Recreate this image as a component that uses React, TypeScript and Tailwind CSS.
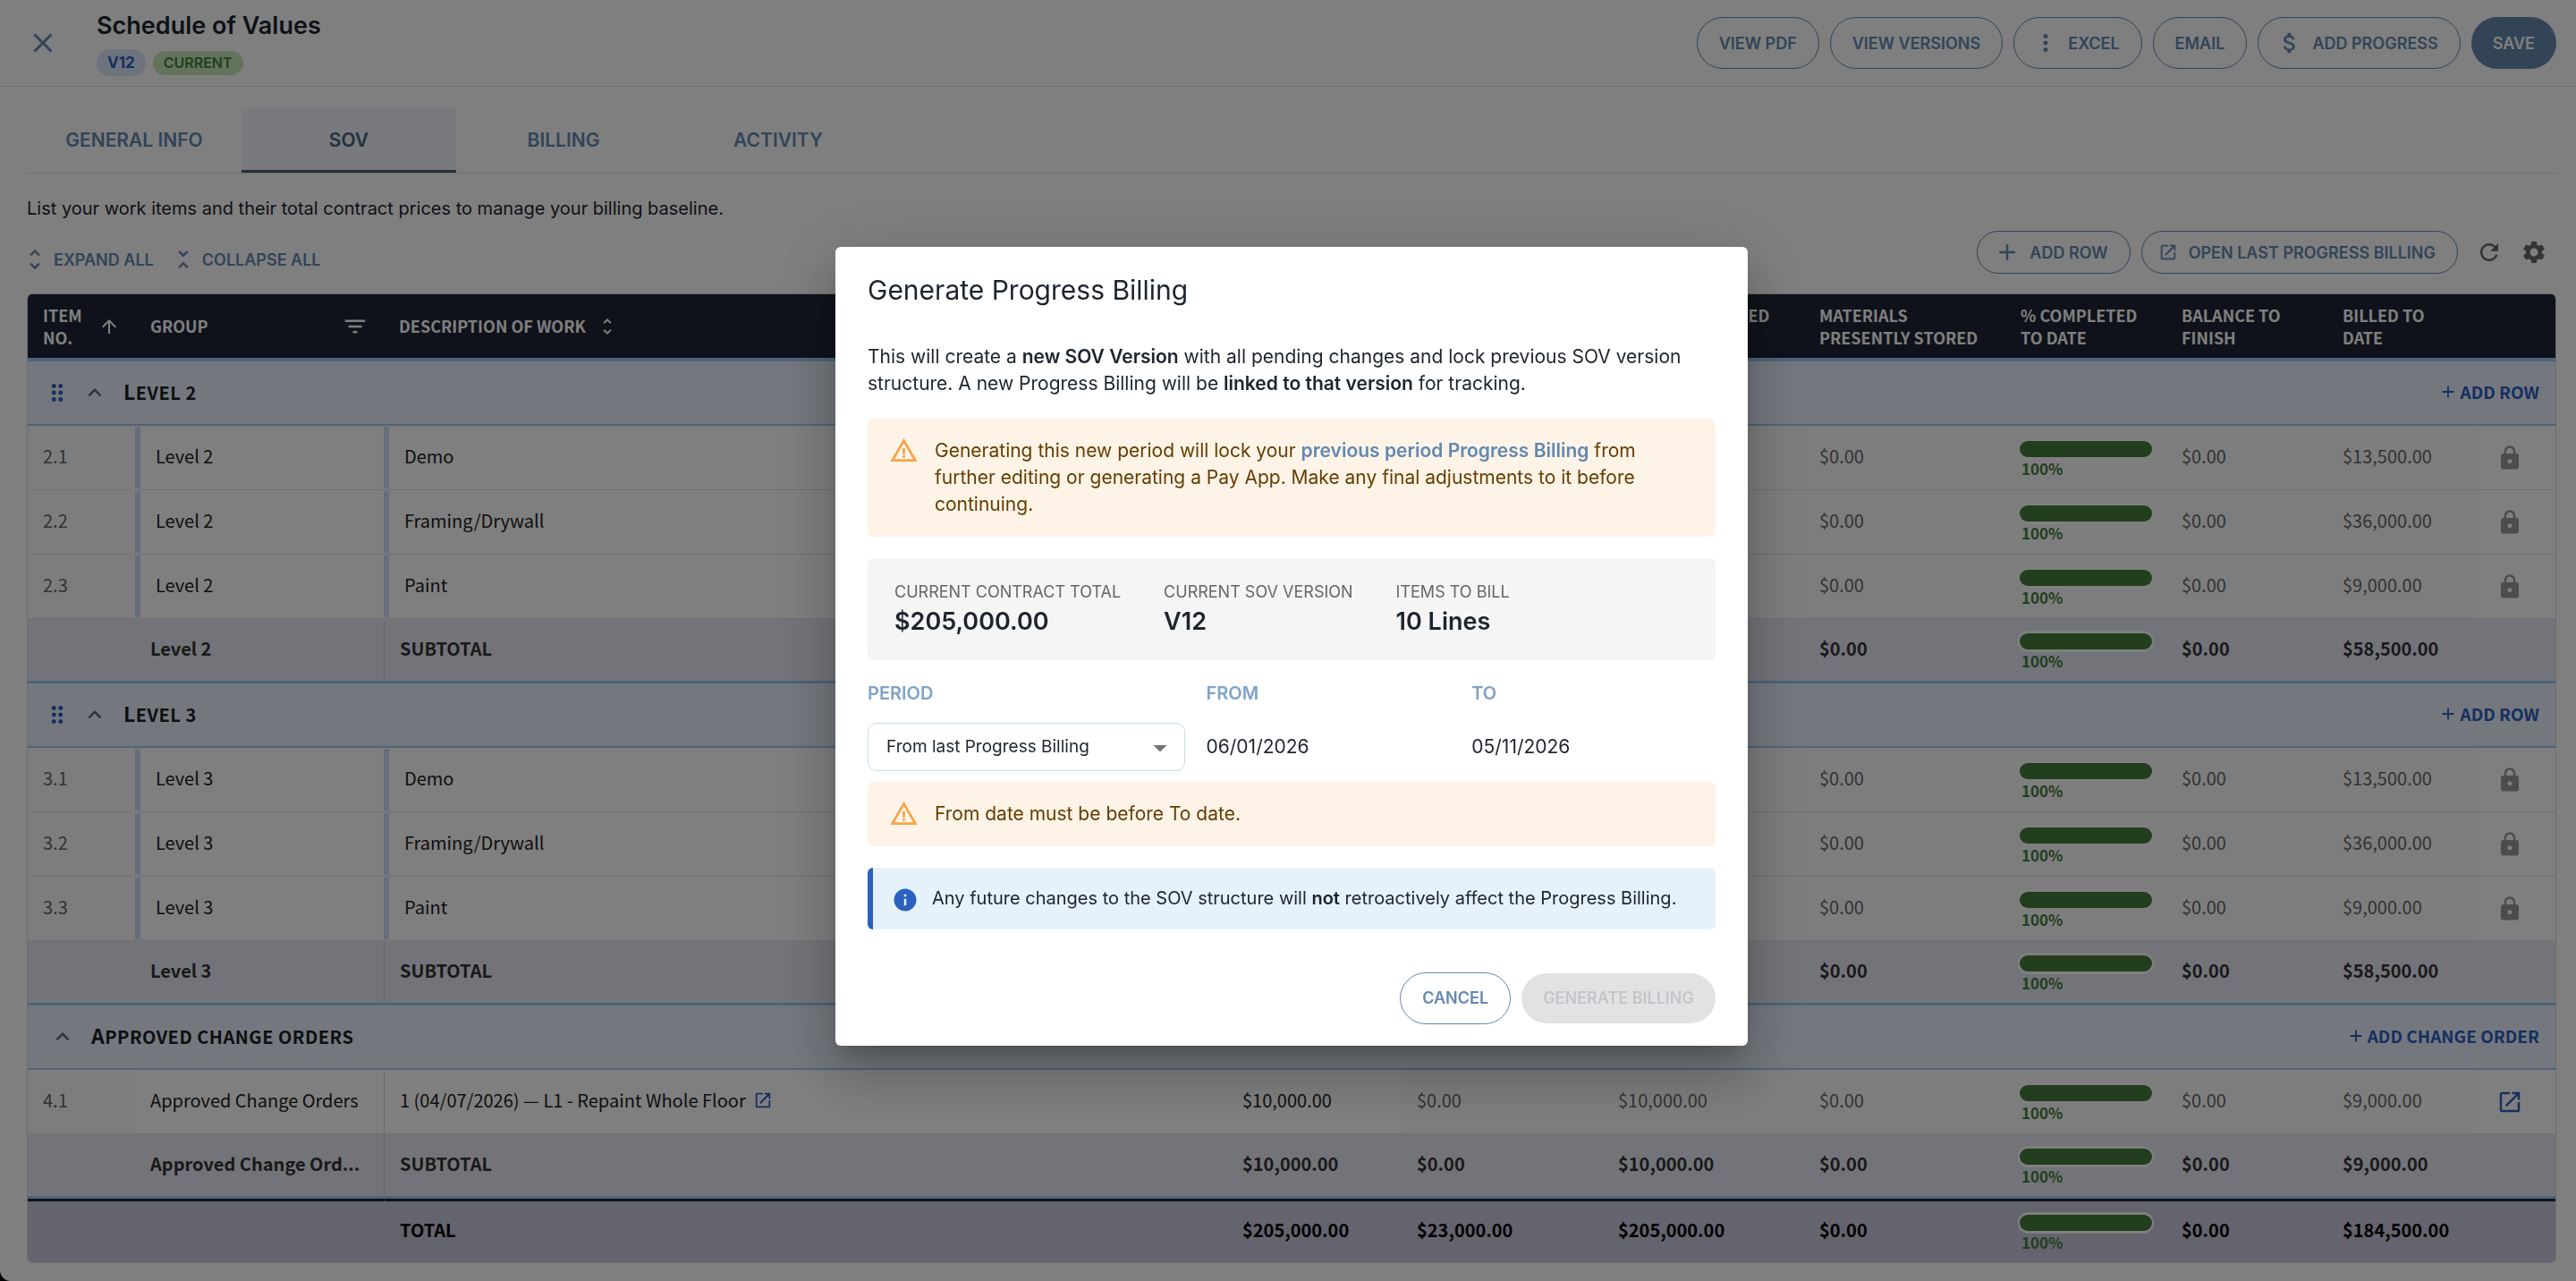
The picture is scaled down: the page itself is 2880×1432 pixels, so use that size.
import React from 'react';
import {
  MdAdd,
  MdArrowDropDown,
  MdArrowUpward,
  MdAttachMoney,
  MdClose,
  MdDragIndicator,
  MdFilterList,
  MdInfo,
  MdKeyboardArrowUp,
  MdLock,
  MdMoreVert,
  MdOpenInNew,
  MdRefresh,
  MdSettings,
  MdUnfoldLess,
  MdUnfoldMore,
  MdWarningAmber,
} from 'react-icons/md';

interface Item {
  no: string;
  group: string;
  description: string;
  value: string;
  previous: string;
  completed: string;
  billed: string;
  changeOrder?: boolean;
}

interface Section {
  title: string;
  action: string;
  draggable: boolean;
  items: Item[];
  subtotal: Item;
}

const levelItems = (level: number): Item[] => [
  { no: `${level}.1`, group: `Level ${level}`, description: 'Demo', value: '$15,000.00', previous: '$1,500.00', completed: '$15,000.00', billed: '$13,500.00' },
  { no: `${level}.2`, group: `Level ${level}`, description: 'Framing/Drywall', value: '$40,000.00', previous: '$4,000.00', completed: '$40,000.00', billed: '$36,000.00' },
  { no: `${level}.3`, group: `Level ${level}`, description: 'Paint', value: '$10,000.00', previous: '$1,000.00', completed: '$10,000.00', billed: '$9,000.00' },
];

const levelSection = (level: number): Section => ({
  title: `Level ${level}`,
  action: 'ADD ROW',
  draggable: true,
  items: levelItems(level),
  subtotal: { no: '', group: `Level ${level}`, description: 'SUBTOTAL', value: '$65,000.00', previous: '$6,500.00', completed: '$65,000.00', billed: '$58,500.00' },
});

const sections: Section[] = [
  levelSection(2),
  levelSection(3),
  {
    title: 'Approved change orders',
    action: 'ADD CHANGE ORDER',
    draggable: false,
    items: [
      { no: '4.1', group: 'Approved Change Orders', description: '1 (04/07/2026) — L1 - Repaint Whole Floor', value: '$10,000.00', previous: '$0.00', completed: '$10,000.00', billed: '$9,000.00', changeOrder: true },
    ],
    subtotal: { no: '', group: 'Approved Change Ord...', description: 'SUBTOTAL', value: '$10,000.00', previous: '$0.00', completed: '$10,000.00', billed: '$9,000.00' },
  },
];

const outlineButton =
  'flex items-center rounded-full border border-[#6488b0] px-6 text-[18px] font-semibold text-[#6488b0]';

const Header: React.FC = () => (
  <header className="flex h-[97px] items-center border-b border-[#dcdcdc] pl-[30px] pr-[22px]">
    <button aria-label="Close" className="mr-[42px] text-[#6488b0]">
      <MdClose className="size-9" />
    </button>
    <div>
      <h1 className="text-[27px] leading-9 font-semibold text-[#1d242e]">Schedule of Values</h1>
      <div className="mt-2 flex items-center gap-2">
        <span className="rounded-full bg-[#dbe7fb] px-3 text-[17px] leading-[30px] font-bold text-[#2a5fc0]">V12</span>
        <span className="rounded-full bg-[#c8e6b9] px-3 text-[16px] leading-[27px] font-semibold text-[#3f8032]">CURRENT</span>
      </div>
    </div>
    <div className="ml-auto flex gap-3">
      <button className={`${outlineButton} h-[58px]`}>VIEW PDF</button>
      <button className={`${outlineButton} h-[58px]`}>VIEW VERSIONS</button>
      <button className={`${outlineButton} h-[58px]`}>
        <MdMoreVert className="-ml-1 mr-2.5 size-[30px]" />
        EXCEL
      </button>
      <button className={`${outlineButton} h-[58px]`}>EMAIL</button>
      <button className={`${outlineButton} h-[58px]`}>
        <MdAttachMoney className="-ml-1 mr-2.5 size-[30px]" />
        ADD PROGRESS
      </button>
      <button className="h-[58px] rounded-full bg-[#6488ad] px-6 text-[18px] font-semibold text-white">SAVE</button>
    </div>
  </header>
);

const Tabs: React.FC = () => (
  <nav className="flex border-b border-[#dcdcdc] text-[21px] font-semibold text-[#6488b0]">
    <button className="h-[72px] w-60">GENERAL INFO</button>
    <button className="h-[72px] w-60 border-b-[3px] border-[#48637d] bg-[#f0f4fa] pt-[3px] text-[#48637d]">SOV</button>
    <button className="h-[72px] w-60">BILLING</button>
    <button className="h-[72px] w-60">ACTIVITY</button>
  </nav>
);

const Toolbar: React.FC = () => (
  <div className="mt-[10px] mb-[22px] flex items-end justify-between">
    <div className="flex gap-6 text-[18px] font-semibold text-[#6488b0]">
      <button className="flex h-8 items-center gap-1.5">
        <MdUnfoldMore className="-ml-1.5 size-[30px]" />
        EXPAND ALL
      </button>
      <button className="flex h-8 items-center gap-1.5">
        <MdUnfoldLess className="-ml-1.5 size-[30px]" />
        COLLAPSE ALL
      </button>
    </div>
    <div className="flex items-center gap-3">
      <button className={`${outlineButton} h-12`}>
        <MdAdd className="-ml-1.5 mr-2.5 size-[30px]" />
        ADD ROW
      </button>
      <button className={`${outlineButton} h-12`}>
        <MdOpenInNew className="-ml-1.5 mr-3 size-[22px]" />
        OPEN LAST PROGRESS BILLING
      </button>
      <div className="ml-2 flex items-center gap-5 pr-2.5 text-[#666]">
        <button aria-label="Refresh"><MdRefresh className="size-[30px]" /></button>
        <button aria-label="Settings"><MdSettings className="size-[30px]" /></button>
      </div>
    </div>
  </div>
);

const Progress: React.FC = () => (
  <div className="pl-[14px]">
    <div className="w-[152px] rounded-full bg-white px-[2px] py-[3px]">
      <div className="h-[18px] rounded-full bg-[#467d3c]" />
    </div>
    <div className="pl-1 text-[17px] leading-5 font-bold text-[#467d3c]">100%</div>
  </div>
);

const ItemRow: React.FC<{ item: Item }> = ({ item }) => {
  const cell = 'h-[72px] border-b border-[#e0e0e0]';
  const locked = `${cell} bg-[#fafafa] px-[17px] pb-1 text-[#666]`;
  const bar = item.changeOrder
    ? 'flex h-[71px] items-center px-[17px] pb-1'
    : 'my-px flex h-[69px] items-center border-l-[6px] border-[#ccdcf2] px-[17px] pb-1';
  return (
    <tr>
      <td className={locked}>{item.no}</td>
      <td className={cell}><div className={bar}>{item.group}</div></td>
      <td className={item.changeOrder ? `${cell} border-l border-l-[#d4d4d8]` : cell}>
        <div className={bar}>
          {item.description}
          {item.changeOrder && (
            <a href="#change-order" aria-label="Open change order" className="ml-2 text-[#2a5fc0]">
              <MdOpenInNew className="size-[22px]" />
            </a>
          )}
        </div>
      </td>
      <td className={`${cell} px-[17px] pb-1`}>{item.value}</td>
      <td className={locked}>{item.previous}</td>
      <td className={locked}>{item.completed}</td>
      <td className={locked}>$0.00</td>
      <td className={`${cell} bg-[#fafafa]`}><Progress /></td>
      <td className={locked}>$0.00</td>
      <td className={locked}>{item.billed}</td>
      <td className={cell}>
        <div className="flex justify-center pr-3">
          {item.changeOrder ? (
            <a href="#change-order" aria-label="View change order"><MdOpenInNew className="size-[30px] text-[#2a5fc0]" /></a>
          ) : (
            <MdLock className="size-[30px] text-[#999]" />
          )}
        </div>
      </td>
    </tr>
  );
};

const SummaryRow: React.FC<{ item: Item; total?: boolean }> = ({ item, total }) => {
  const edge = total ? 'h-[71px] border-t-[3px] border-[#1e2535]' : 'h-[72px] border-b-[3px] border-[#9ac8f5]';
  const cell = `${edge} px-[17px] pb-1`;
  return (
    <tr className={total ? 'bg-[#c8c8de] font-bold text-black' : 'bg-[#e7e8f3] font-bold text-[#333]'}>
      <td className={cell} />
      <td className={`${cell} whitespace-nowrap`}>{item.group}</td>
      <td className={`${cell} border-l border-l-[#c8c8d4]`}>{item.description}</td>
      <td className={cell}>{item.value}</td>
      <td className={cell}>{item.previous}</td>
      <td className={cell}>{item.completed}</td>
      <td className={cell}>$0.00</td>
      <td className={edge}><Progress /></td>
      <td className={cell}>$0.00</td>
      <td className={cell}>{item.billed}</td>
      <td className={cell} />
    </tr>
  );
};

const SectionRows: React.FC<{ section: Section }> = ({ section }) => (
  <>
    <tr className="bg-[#e8f1fd]">
      <td colSpan={11} className="h-[72px] border-b-2 border-[#9ac8f5]">
        <div className="flex items-center pr-[18px]">
          {section.draggable ? (
            <MdDragIndicator className="ml-[18px] size-[30px] text-[#2a5fc0]" />
          ) : (
            <span className="w-3" />
          )}
          <button aria-label="Collapse section" className="ml-3 text-[#666]">
            <MdKeyboardArrowUp className="size-[30px]" />
          </button>
          <h2 className="ml-[17px] pb-1 text-[20px] font-bold tracking-wide text-[#1a1f24] uppercase first-letter:text-[23px]">
            {section.title}
          </h2>
          <button className="ml-auto flex items-center gap-0.5 pb-0.5 text-[19px] font-bold text-[#2a5fc0]">
            <MdAdd className="size-[22px]" />
            {section.action}
          </button>
        </div>
      </td>
    </tr>
    {section.items.map((item) => (
      <ItemRow key={item.no} item={item} />
    ))}
    <SummaryRow item={section.subtotal} />
  </>
);

const SovTable: React.FC = () => {
  const th = 'h-[75px] border-b-4 border-[#9ac8f5] px-[17px]';
  return (
    <div className="overflow-hidden rounded-md border border-[#d8d8d8] font-['Noto_Sans_CJK_SC',sans-serif] text-[20px]">
      <table className="w-full table-fixed border-separate border-spacing-0 text-left">
        <colgroup>
          <col className="w-[120px]" />
          <col className="w-[278px]" />
          <col />
          <col className="w-[195px]" />
          <col className="w-[225px]" />
          <col className="w-[225px]" />
          <col className="w-[225px]" />
          <col className="w-[180px]" />
          <col className="w-[180px]" />
          <col className="w-[165px]" />
          <col className="w-[90px]" />
        </colgroup>
        <thead className="bg-[#1e2535] text-[18px] leading-[25px] text-white">
          <tr>
            <th className={th}>
              <div className="flex items-center justify-between">
                <span>ITEM<br />NO.</span>
                <MdArrowUpward className="size-6" />
              </div>
            </th>
            <th className={th}>
              <div className="flex items-center justify-between">
                GROUP
                <MdFilterList className="size-[30px]" />
              </div>
            </th>
            <th className={th}>
              <div className="flex items-center gap-3">
                DESCRIPTION OF WORK
                <MdUnfoldMore className="size-6" />
              </div>
            </th>
            <th className={th}>SCHEDULED<br />VALUE</th>
            <th className={th}>BALANCE<br />TO BILL</th>
            <th className={th}>TOTAL COMPLETED<br />TO DATE</th>
            <th className={th}>MATERIALS<br />PRESENTLY STORED</th>
            <th className={th}>% COMPLETED<br />TO DATE</th>
            <th className={th}>BALANCE TO<br />FINISH</th>
            <th className={th}>BILLED TO<br />DATE</th>
            <th className={th} aria-label="Actions" />
          </tr>
        </thead>
        <tbody className="text-[#1c1c1c]">
          {sections.map((section) => (
            <SectionRows key={section.title} section={section} />
          ))}
          <SummaryRow
            total
            item={{ no: '', group: '', description: 'TOTAL', value: '$205,000.00', previous: '$23,000.00', completed: '$205,000.00', billed: '$184,500.00' }}
          />
        </tbody>
      </table>
    </div>
  );
};

const Warning: React.FC<{ children: React.ReactNode }> = ({ children }) => (
  <div role="alert" className="flex rounded-md bg-[#fdf4e7] px-6 py-[21px] text-[#663c00]">
    <MdWarningAmber className="-my-0.5 mr-[18px] size-[33px] shrink-0 text-[#f5a54a]" />
    <p>{children}</p>
  </div>
);

const Stat: React.FC<{ label: string; value: string }> = ({ label, value }) => (
  <div>
    <div className="text-[18px] leading-[27px] text-[#666]">{label}</div>
    <div className="text-[27px] leading-[39px] font-semibold text-[#1d242e]">{value}</div>
  </div>
);

const BillingDialog: React.FC = () => (
  <div className="fixed inset-0 flex items-center justify-center bg-black/50 pt-3 pl-2">
    <div
      role="dialog"
      aria-labelledby="dialog-title"
      className="w-[1020px] rounded-md bg-white px-9 py-6 text-[21px] leading-[30px] text-[#1d242e] shadow-[0_16px_22px_-10px_rgba(0,0,0,0.2),0_36px_57px_4px_rgba(0,0,0,0.14),0_14px_69px_12px_rgba(0,0,0,0.12)]"
    >
      <h2 id="dialog-title" className="text-[30px] leading-[48px]">Generate Progress Billing</h2>
      <p className="mt-9 mb-6">
        This will create a <b className="font-semibold">new SOV Version</b> with all pending changes and lock previous SOV version structure. A new
        Progress Billing will be <b className="font-semibold">linked to that version</b> for tracking.
      </p>
      <Warning>
        Generating this new period will lock your{' '}
        <a href="#previous" className="font-semibold text-[#6488b0]">previous period Progress Billing</a> from further editing or
        generating a Pay App. Make any final adjustments to it before continuing.
      </Warning>
      <div className="mt-6 flex gap-12 rounded-md bg-[#f5f5f5] px-[30px] py-6">
        <Stat label="CURRENT CONTRACT TOTAL" value="$205,000.00" />
        <Stat label="CURRENT SOV VERSION" value="V12" />
        <Stat label="ITEMS TO BILL" value="10 Lines" />
      </div>
      <div className="mt-[22px] mb-3 grid grid-cols-[1.3fr_1fr_1fr] gap-x-6 gap-y-[18px]">
        <label htmlFor="period" className="text-[20px] font-semibold text-[#7fa3c8]">PERIOD</label>
        <span className="text-[20px] font-semibold text-[#7fa3c8]">FROM</span>
        <span className="text-[20px] font-semibold text-[#7fa3c8]">TO</span>
        <div className="relative">
          <select id="period" className="h-[54px] w-full appearance-none rounded-[10px] border border-[#ccdcea] bg-white px-5 text-[19px]">
            <option>From last Progress Billing</option>
          </select>
          <MdArrowDropDown className="pointer-events-none absolute top-2.5 right-2.5 size-9 text-[#757575]" />
        </div>
        <div className="self-center">06/01/2026</div>
        <div className="self-center">05/11/2026</div>
      </div>
      <Warning>From date must be before To date.</Warning>
      <div className="mt-6 mb-12 flex h-[69px] items-center rounded-md border-l-[6px] border-[#2a61c0] bg-[#e5f2fc] pl-[21px]">
        <MdInfo className="mt-1 mr-[15px] size-[30px] shrink-0 text-[#2a61c0]" />
        <p className="text-[20px]">
          Any future changes to the SOV structure will <b className="font-semibold">not</b> retroactively affect the Progress Billing.
        </p>
      </div>
      <div className="flex items-center justify-end gap-3">
        <button className={`${outlineButton} h-[58px]`}>CANCEL</button>
        <button disabled className="h-14 rounded-full bg-[#e1e2e4] px-6 text-[18px] font-semibold text-[#c3c5c8]">GENERATE BILLING</button>
      </div>
    </div>
  </div>
);

const App: React.FC = () => {
  return (
    <div className="min-h-screen bg-black font-[Inter,sans-serif]">
      <div className="min-h-screen rounded-bl-[12px] bg-white">
        <Header />
        <main className="pt-6 pb-5 pl-[30px] pr-[22px]">
          <Tabs />
          <p className="mt-6 text-[20px] leading-[30px] text-[#1d242e]">
            List your work items and their total contract prices to manage your billing baseline.
          </p>
          <Toolbar />
          <SovTable />
        </main>
      </div>
      <BillingDialog />
    </div>
  );
};

export default App;
